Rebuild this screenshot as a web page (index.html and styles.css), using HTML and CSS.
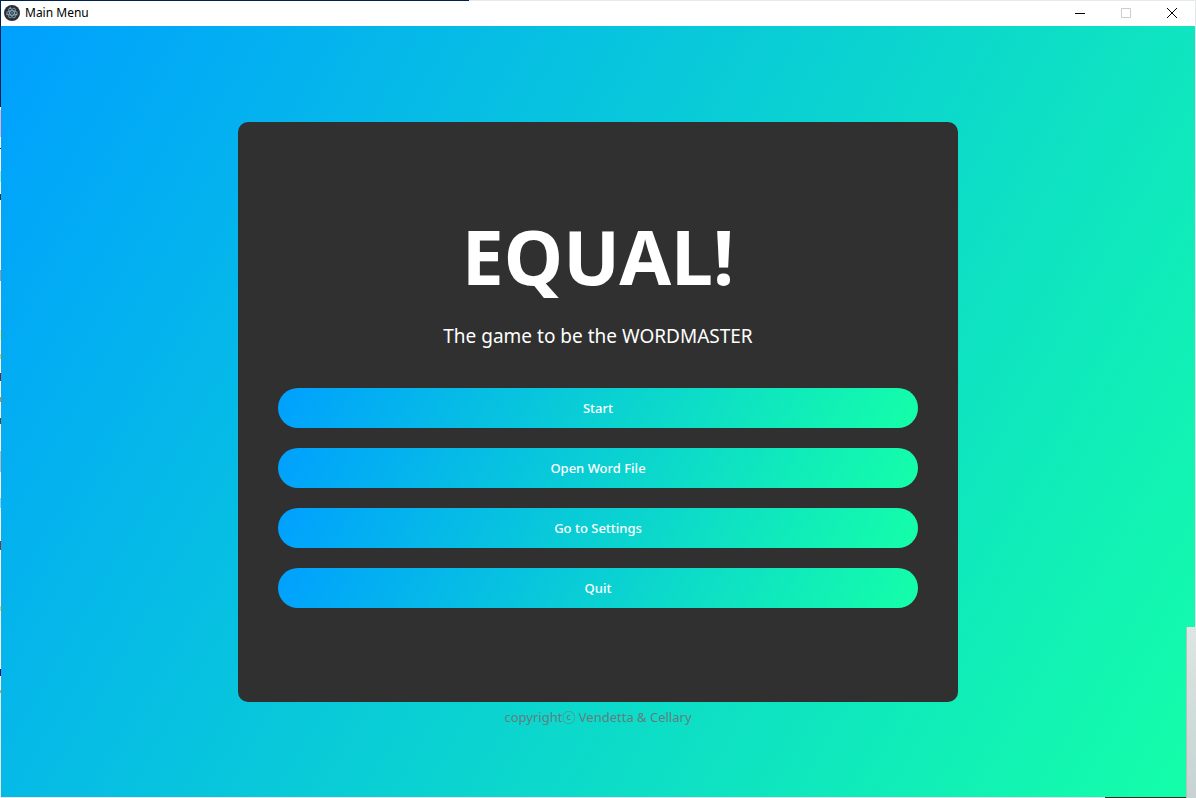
FILE: index.html
```html
<!DOCTYPE html>
<html lang="en">
<head>
<meta charset="utf-8">
<title>Main Menu</title>
<link rel="stylesheet" href="styles.css">
</head>
<body>
<div class="window">
  <header class="titlebar">
    <svg class="app-icon" viewBox="0 0 16 16" aria-hidden="true">
      <circle cx="8" cy="8" r="8" fill="#2b2e3a"/>
      <g fill="none" stroke="#9fc6d2" stroke-width=".7">
        <ellipse cx="8" cy="8" rx="5.4" ry="2.2"/>
        <ellipse cx="8" cy="8" rx="5.4" ry="2.2" transform="rotate(60 8 8)"/>
        <ellipse cx="8" cy="8" rx="5.4" ry="2.2" transform="rotate(120 8 8)"/>
      </g>
      <g fill="#9fc6d2">
        <circle cx="8" cy="8" r=".7"/>
        <circle cx="3" cy="9.6" r=".7"/>
        <circle cx="12.8" cy="9.8" r=".7"/>
        <circle cx="6.4" cy="3" r=".7"/>
      </g>
    </svg>
    <span class="window-title">Main Menu</span>
    <div class="controls">
      <button class="control" aria-label="Minimize"><svg viewBox="0 0 10 10"><path d="M0 5.5h10"/></svg></button>
      <button class="control" aria-label="Maximize" disabled><svg viewBox="0 0 10 10"><path d="M.5 .5h9v9h-9z"/></svg></button>
      <button class="control" aria-label="Close"><svg viewBox="0 0 10 10"><path d="M0 0l10 10M10 0L0 10"/></svg></button>
    </div>
  </header>
  <main class="page">
    <section class="card">
      <h1 class="title">EQUAL!</h1>
      <p class="tagline">The game to be the WORDMASTER</p>
      <nav class="menu">
        <button class="menu-button">Start</button>
        <button class="menu-button">Open Word File</button>
        <button class="menu-button">Go to Settings</button>
        <button class="menu-button">Quit</button>
      </nav>
    </section>
    <footer class="copyright">copyrightⓒ Vendetta &amp; Cellary</footer>
  </main>
  <div class="side-strip"></div>
</div>
</body>
</html>
```
FILE: styles.css
```css
* { box-sizing: border-box; }
body {
  margin: 0;
  font-family: "Noto Sans", "Noto Sans CJK KR", sans-serif;
}
.window {
  display: flex;
  position: relative;
  flex-direction: column;
  min-height: 100vh;
  padding: 1px;
  background:
    linear-gradient(90deg, #00204e 469px, #e8e8e8 469px) top / 100% 1px no-repeat,
    linear-gradient(#1c2a28, #1c2a28) right 10px bottom / 81px 1px no-repeat,
    linear-gradient(
      #00204e 107px, #fff 107px 110px, #f0a8d8 110px 137px, #fff 137px 148px,
      #222 148px 149px, #fff 149px 171px, #a0f0d0 171px 182px, #fff 182px 194px,
      #333 194px 200px, #fff 200px 270px, #999 270px 281px, #fff 281px 330px,
      #f8ec80 330px 340px, #fff 340px 354px, #f0c040 354px 359px, #fff 359px 373px,
      #802020 373px 381px, #fff 381px 397px, #e08020 397px 402px, #fff 402px 418px,
      #604030 418px 424px, #fff 424px 451px, #b8b8b8 451px 472px, #fff 472px 498px,
      #90d0f8 498px 508px, #fff 508px 541px, #903030 541px 550px, #fff 550px 606px,
      #f8c850 606px 611px, #fff 611px 669px, #400070 669px 676px, #fff 676px 690px,
      #e0a030 690px 693px, #e4e9ea 693px) left / 1px 100% no-repeat,
    #e4e9ea;
}
.titlebar {
  display: flex;
  align-items: center;
  height: 25px;
  padding: 0 0 1px 3px;
  background: #fff;
}
.app-icon { width: 16px; height: 16px; }
.window-title {
  margin-left: 5px;
  font-size: 12px;
  line-height: 16px;
  color: #000;
}
.controls { display: flex; margin-left: auto; }
.control {
  display: grid;
  place-items: center;
  width: 46px;
  height: 24px;
  padding: 0;
  border: 0;
  background: none;
}
.control svg {
  width: 10px;
  height: 10px;
  fill: none;
  stroke: #000;
  overflow: visible;
}
.control:disabled svg { stroke: #ccc; }
.page {
  flex: 1;
  display: flex;
  flex-direction: column;
  align-items: center;
  justify-content: center;
  padding-top: 24px;
  background: linear-gradient(120deg, #00a0ff, #14ffa8);
}
.card {
  display: flex;
  flex-direction: column;
  justify-content: center;
  width: 720px;
  max-width: 100%;
  min-height: 580px;
  padding: 40px 40px 56px;
  border-radius: 10px;
  background: #303030;
  color: #fff;
  text-align: center;
}
.title {
  margin: 0;
  font-size: 75px;
  font-weight: 700;
  line-height: 112px;
}
.tagline {
  margin: 12px 0 40px;
  font-size: 19px;
  line-height: 24px;
}
.menu { display: grid; gap: 20px; }
.menu-button {
  height: 40px;
  border: 0;
  border-radius: 20px;
  background: linear-gradient(120deg, #00a0ff, #14ffa8);
  color: #fff;
  font-family: inherit;
  font-size: 13px;
  font-weight: 500;
}
.copyright {
  margin-top: 6px;
  font-size: 13px;
  line-height: 18px;
  color: #617f80;
}
.side-strip {
  position: absolute;
  right: 0;
  bottom: 0;
  width: 10px;
  height: 171px;
  border-left: 1px solid #b5c0be;
  background: linear-gradient(#dce6e3, #c6d3d1);
}
```
